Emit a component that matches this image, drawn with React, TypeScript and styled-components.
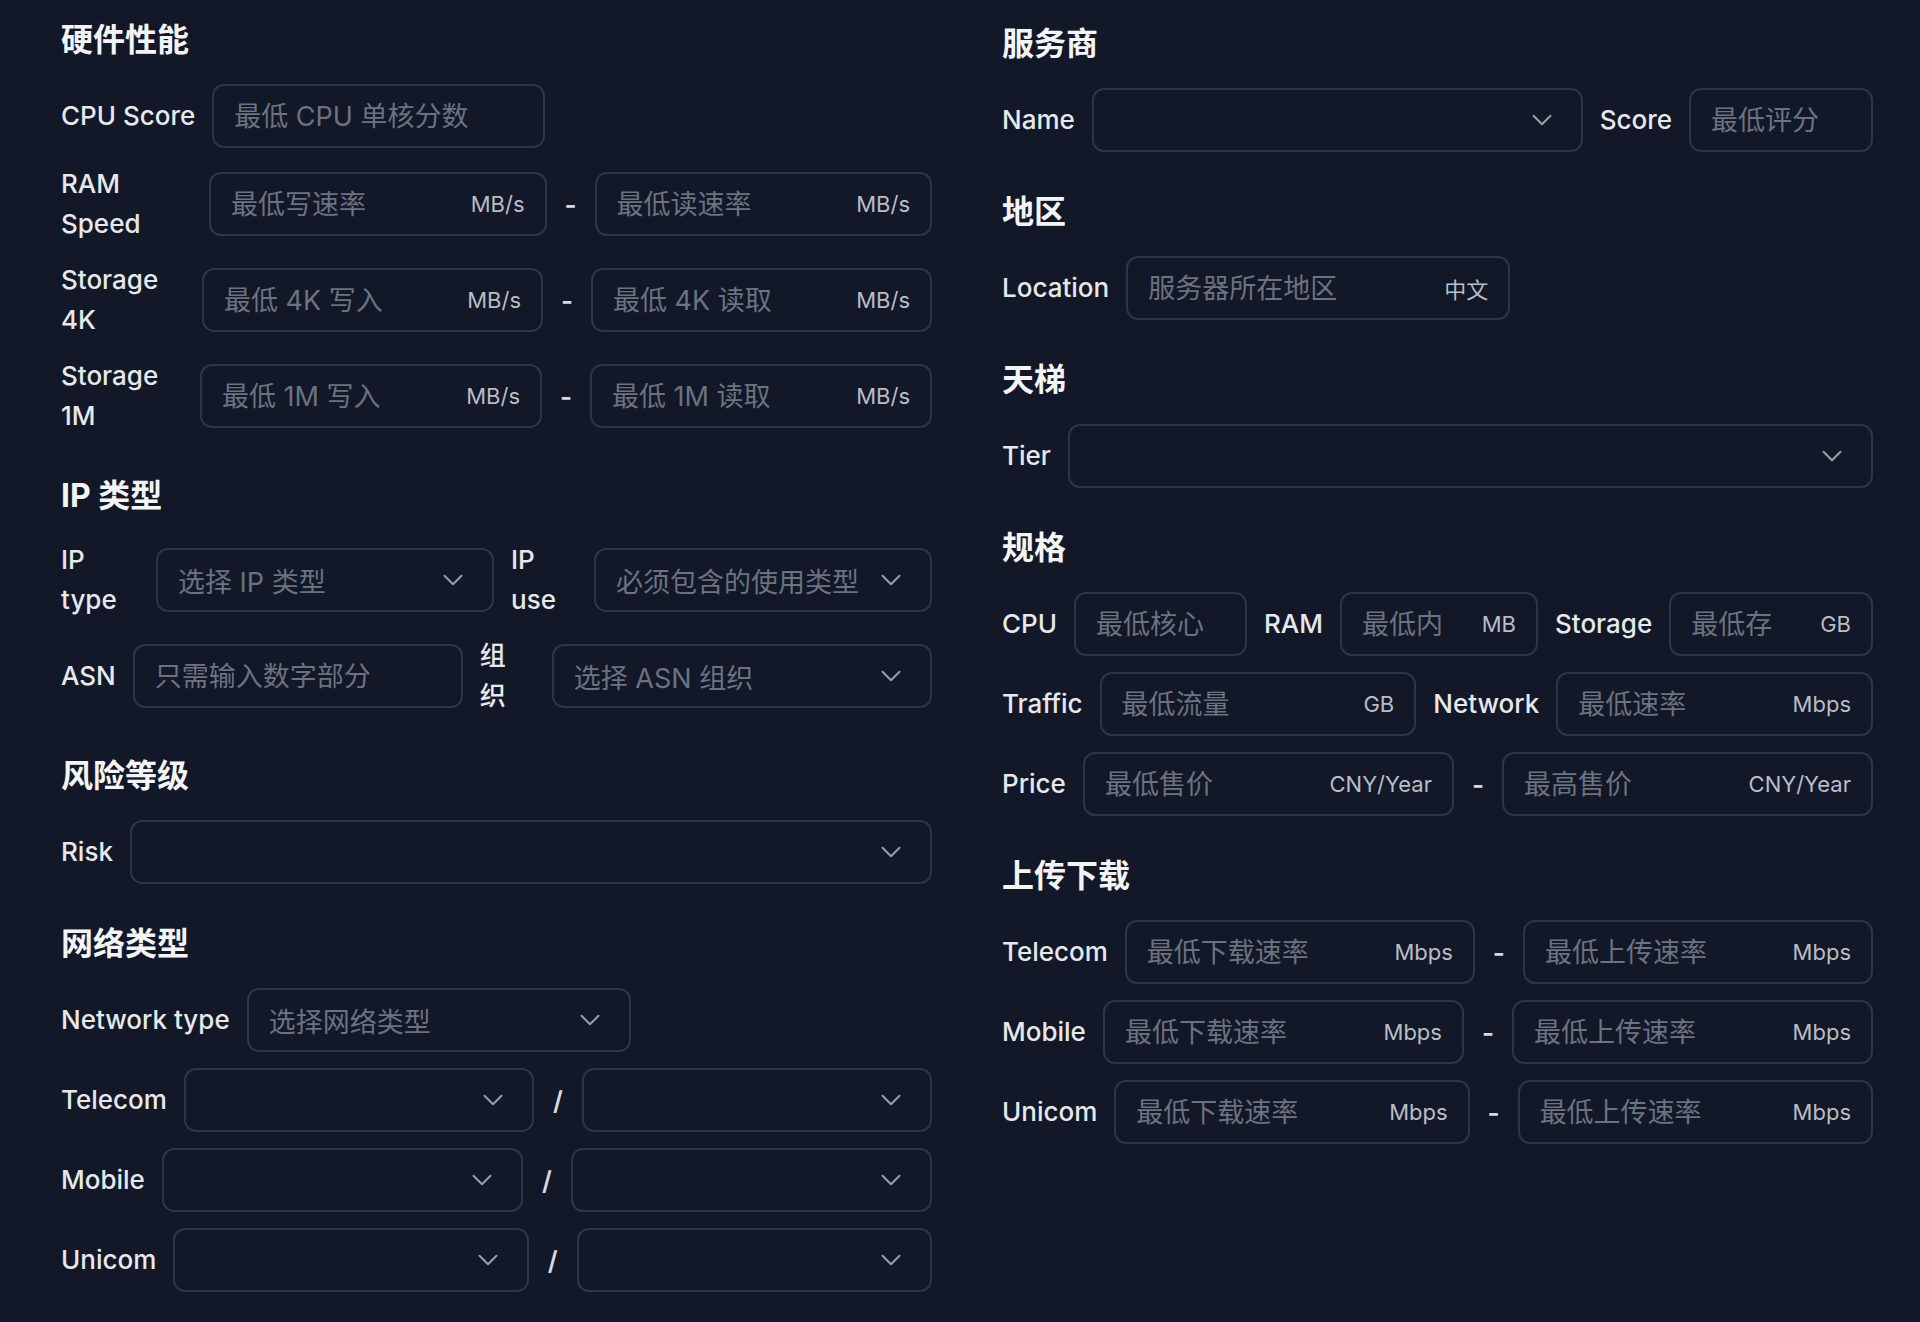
import React from 'react';
import styled, { createGlobalStyle } from 'styled-components';
import { ChevronDown } from 'lucide-react';

const GlobalStyle = createGlobalStyle`
  html, body {
    margin: 0;
    padding: 0;
    background: #121827;
  }
  * {
    box-sizing: border-box;
  }
`;

const Page = styled.div`
  display: grid;
  grid-template-columns: minmax(0, 1fr) minmax(0, 1fr);
  column-gap: 70px;
  min-height: 1322px;
  padding: 20px 47px 30px 61px;
  background: #121827;
  font-family: Inter, 'Noto Sans CJK SC', sans-serif;
  color: #e5e7eb;
`;

const Column = styled.div<{ $offset?: number }>`
  display: flex;
  flex-direction: column;
  gap: 40px;
  min-width: 0;
  padding-top: ${(p) => p.$offset || 0}px;
`;

const Section = styled.section`
  display: flex;
  flex-direction: column;
  gap: 16px;
`;

const Title = styled.h2`
  margin: 0 0 8px;
  font-size: 32px;
  line-height: 40px;
  font-weight: 700;
  color: #f3f4f6;
`;

const Row = styled.div`
  display: flex;
  align-items: center;
  gap: 17px;
  min-width: 0;
`;

const Label = styled.label<{ $w?: number }>`
  flex-shrink: 0;
  ${(p) => (p.$w ? `width: ${p.$w}px;` : 'white-space: nowrap;')}
  font-size: 26px;
  line-height: 40px;
  font-weight: 500;
  color: #e6e8ec;
`;

const Box = styled.div<{ $w?: number }>`
  display: flex;
  align-items: center;
  gap: 10px;
  height: 64px;
  padding: 0 20px;
  border: 2px solid #2d3547;
  border-radius: 12px;
  background: transparent;
  ${(p) => (p.$w ? `width: ${p.$w}px; flex-shrink: 0;` : 'flex: 1 1 0; min-width: 0;')}
`;

const SelectBox = styled(Box)`
  padding-right: 22px;
  cursor: pointer;
`;

const Field = styled.input`
  flex: 1 1 0;
  width: 0;
  min-width: 0;
  padding: 0;
  border: none;
  outline: none;
  background: transparent;
  font-family: inherit;
  font-size: 27px;
  color: #e5e7eb;

  &::placeholder {
    color: #6b7280;
  }
`;

const Hint = styled.span`
  flex: 1;
  min-width: 0;
  overflow: hidden;
  white-space: nowrap;
  font-size: 27px;
  color: #6b7280;
`;

const Unit = styled.span`
  flex-shrink: 0;
  font-size: 22px;
  color: #b9bdc6;
`;

const Chevron = styled(ChevronDown)`
  flex-shrink: 0;
  margin-left: auto;
  color: #9aa0ab;
`;

const Sep = styled.span`
  width: 14px;
  flex-shrink: 0;
  text-align: center;
  font-size: 26px;
  font-weight: 600;
  color: #d7dae0;
`;

const Spacer = styled.div`
  flex: 1 1 0;
`;

type InputProps = { placeholder: string; unit?: string; w?: number };

const Input = ({ placeholder, unit, w }: InputProps) => (
  <Box $w={w}>
    <Field placeholder={placeholder} />
    {unit && <Unit>{unit}</Unit>}
  </Box>
);

type SelectProps = { placeholder?: string; w?: number };

const Select = ({ placeholder, w }: SelectProps) => (
  <SelectBox $w={w}>
    {placeholder ? <Hint>{placeholder}</Hint> : <Spacer />}
    <Chevron size={34} strokeWidth={1.4} />
  </SelectBox>
);

const RangeRow = ({
  label,
  w,
  sep = '-',
  children,
}: {
  label: React.ReactNode;
  w?: number;
  sep?: string;
  children: [React.ReactNode, React.ReactNode];
}) => (
  <Row>
    <Label $w={w}>{label}</Label>
    {children[0]}
    <Sep>{sep}</Sep>
    {children[1]}
  </Row>
);

const App: React.FC = () => {
  return (
    <>
      <GlobalStyle />
      <Page>
        <Column>
          <Section>
            <Title>硬件性能</Title>
            <Row>
              <Label>CPU Score</Label>
              <Input placeholder="最低 CPU 单核分数" w={333} />
            </Row>
            <RangeRow label="RAM Speed" w={131}>
              <Input placeholder="最低写速率" unit="MB/s" />
              <Input placeholder="最低读速率" unit="MB/s" />
            </RangeRow>
            <RangeRow label="Storage 4K" w={124}>
              <Input placeholder="最低 4K 写入" unit="MB/s" />
              <Input placeholder="最低 4K 读取" unit="MB/s" />
            </RangeRow>
            <RangeRow label="Storage 1M" w={122}>
              <Input placeholder="最低 1M 写入" unit="MB/s" />
              <Input placeholder="最低 1M 读取" unit="MB/s" />
            </RangeRow>
          </Section>

          <Section>
            <Title>IP 类型</Title>
            <Row>
              <Label $w={78}>IP type</Label>
              <Select placeholder="选择 IP 类型" />
              <Label $w={66}>IP use</Label>
              <Select placeholder="必须包含的使用类型" />
            </Row>
            <Row>
              <Label>ASN</Label>
              <Input placeholder="只需输入数字部分" w={330} />
              <Label $w={55}>
                组<br />织
              </Label>
              <Select placeholder="选择 ASN 组织" />
            </Row>
          </Section>

          <Section>
            <Title>风险等级</Title>
            <Row>
              <Label>Risk</Label>
              <Select />
            </Row>
          </Section>

          <Section>
            <Title>网络类型</Title>
            <Row>
              <Label>Network type</Label>
              <Select placeholder="选择网络类型" w={384} />
            </Row>
            <RangeRow label="Telecom" sep="/">
              <Select />
              <Select />
            </RangeRow>
            <RangeRow label="Mobile" sep="/">
              <Select />
              <Select />
            </RangeRow>
            <RangeRow label="Unicom" sep="/">
              <Select />
              <Select />
            </RangeRow>
          </Section>
        </Column>

        <Column $offset={4}>
          <Section>
            <Title>服务商</Title>
            <Row>
              <Label>Name</Label>
              <Select />
              <Label>Score</Label>
              <Input placeholder="最低评分" w={184} />
            </Row>
          </Section>

          <Section>
            <Title>地区</Title>
            <Row>
              <Label>Location</Label>
              <Input placeholder="服务器所在地区" unit="中文" w={384} />
            </Row>
          </Section>

          <Section>
            <Title>天梯</Title>
            <Row>
              <Label>Tier</Label>
              <Select />
            </Row>
          </Section>

          <Section>
            <Title>规格</Title>
            <Row>
              <Label>CPU</Label>
              <Input placeholder="最低核心" w={173} />
              <Label>RAM</Label>
              <Input placeholder="最低内" unit="MB" w={198} />
              <Label>Storage</Label>
              <Input placeholder="最低存" unit="GB" />
            </Row>
            <Row>
              <Label>Traffic</Label>
              <Input placeholder="最低流量" unit="GB" />
              <Label>Network</Label>
              <Input placeholder="最低速率" unit="Mbps" />
            </Row>
            <RangeRow label="Price">
              <Input placeholder="最低售价" unit="CNY/Year" />
              <Input placeholder="最高售价" unit="CNY/Year" />
            </RangeRow>
          </Section>

          <Section>
            <Title>上传下载</Title>
            <RangeRow label="Telecom">
              <Input placeholder="最低下载速率" unit="Mbps" />
              <Input placeholder="最低上传速率" unit="Mbps" />
            </RangeRow>
            <RangeRow label="Mobile">
              <Input placeholder="最低下载速率" unit="Mbps" />
              <Input placeholder="最低上传速率" unit="Mbps" />
            </RangeRow>
            <RangeRow label="Unicom">
              <Input placeholder="最低下载速率" unit="Mbps" />
              <Input placeholder="最低上传速率" unit="Mbps" />
            </RangeRow>
          </Section>
        </Column>
      </Page>
    </>
  );
};

export default App;
